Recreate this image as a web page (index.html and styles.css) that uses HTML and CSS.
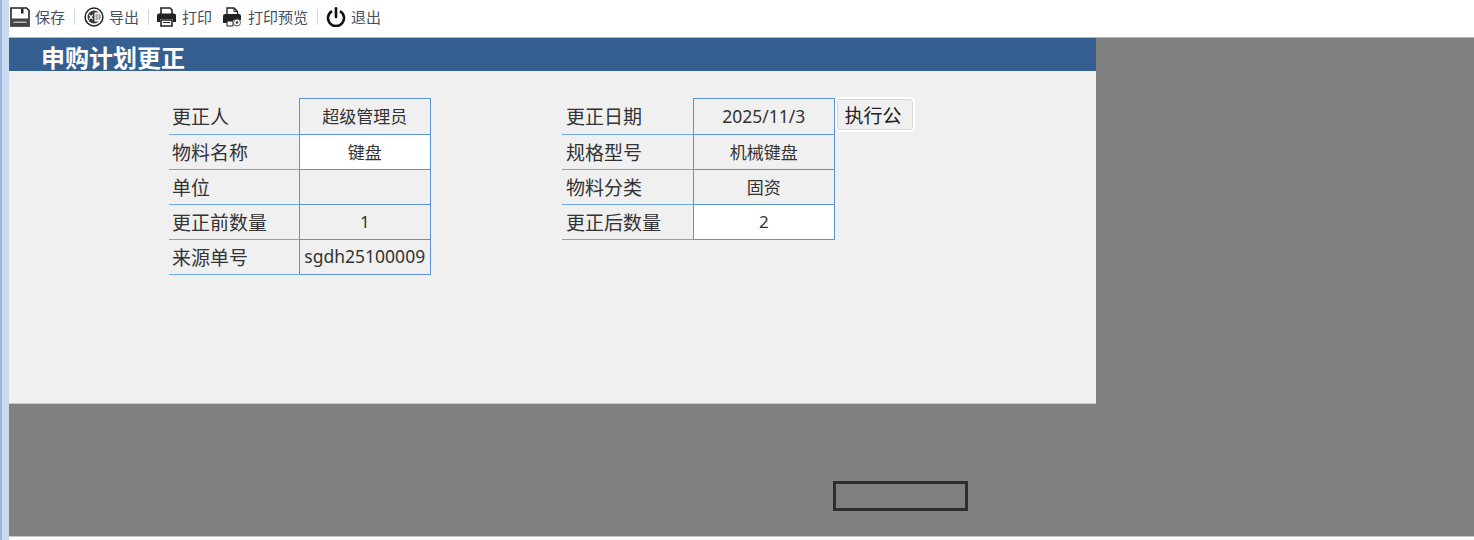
FILE: index.html
```html
<!DOCTYPE html>
<html lang="zh-CN">
  <head>
    <meta charset="UTF-8" />
    <title>申购计划更正</title>
    <link rel="stylesheet" href="styles.css">
  </head>
  <body>
    <div class="rail"></div>
    <div class="main">
      <!-- Toolbar -->
      <div class="toolbar">
        <a class="tool">
          <svg class="icon" viewBox="0 0 20 20">
            <path d="M1 1h15.500L19 3.500V19H1z" fill="#fff" stroke="#222" stroke-width="1.600" />
            <path d="M11 1.500h2.500v5H11z" fill="#222" />
            <path d="M1.500 11.500h17V19h-17z" fill="#444" />
            <path d="M3.500 14.500h13v1.500h-13z" fill="#bbb" />
          </svg>
          <span>保存</span>
        </a>
        <i class="sep"></i>
        <a class="tool">
          <svg class="icon" viewBox="0 0 20 20">
            <circle cx="10" cy="10" r="8.900" fill="none" stroke="#222" stroke-width="1.500" />
            <circle cx="10" cy="10" r="6.500" fill="#3a3a3a" />
            <path d="M10.500 5.500h5v9h-5z" fill="#fff" />
            <path d="M5.300 7.800l3.400 4.400M8.700 7.800l-3.400 4.400" stroke="#fff" stroke-width="1.200" />
            <path d="M11.500 8h3M11.500 10h3M11.500 12h3" stroke="#333" stroke-width=".8" />
          </svg>
          <span>导出</span>
        </a>
        <i class="sep sep-print"></i>
        <a class="tool">
          <svg class="icon icon-wide" viewBox="0 0 21 20">
            <path d="M5 1h9l2 2v5H5z" fill="none" stroke="#222" stroke-width="1.600" />
            <path d="M1 8.500a2 2 0 0 1 2-2h15a2 2 0 0 1 2 2V15h-3v-3H4v3H1z" fill="#222" />
            <path d="M5 13h11v6H5z" fill="none" stroke="#222" stroke-width="1.600" />
            <path d="M7 15h7v1H7z" fill="#222" />
          </svg>
          <span>打印</span>
        </a>
        <a class="tool tool-preview">
          <svg class="icon" viewBox="0 0 20 20">
            <path d="M5 1h7l3.500 3.500V8H5z" fill="none" stroke="#222" stroke-width="1.400" />
            <path d="M12 1v3.500h3.500" fill="none" stroke="#222" />
            <path d="M1 9a2 2 0 0 1 2-2h14a2 2 0 0 1 2 2v4h-8v3H1z" fill="#222" />
            <path d="M5 14h6v5H5z" fill="#fff" stroke="#222" />
            <circle cx="15" cy="15.500" r="3.500" fill="#fff" stroke="#555" />
            <circle cx="15" cy="15.500" r="1.300" fill="#333" />
          </svg>
          <span>打印预览</span>
        </a>
        <i class="sep sep-exit"></i>
        <a class="tool">
          <svg class="icon" viewBox="0 0 20 20">
            <path d="M6 4.200a8 8 0 1 0 8 0" fill="none" stroke="#111" stroke-width="2.600" />
            <path d="M10 1.300v8.700" stroke="#111" stroke-width="2.600" stroke-linecap="round" />
          </svg>
          <span>退出</span>
        </a>
      </div>

      <div class="stage">
        <div class="panel">
          <div class="panel-title">申购计划更正</div>
          <div class="forms">
            <table class="form form-left">
              <tr>
                <th>更正人</th>
                <td>超级管理员</td>
              </tr>
              <tr>
                <th>物料名称</th>
                <td class="editable">键盘</td>
              </tr>
              <tr>
                <th>单位</th>
                <td></td>
              </tr>
              <tr>
                <th>更正前数量</th>
                <td>1</td>
              </tr>
              <tr>
                <th>来源单号</th>
                <td class="num">sgdh25100009</td>
              </tr>
            </table>

            <table class="form form-right">
              <tr>
                <th>更正日期</th>
                <td class="num">2025/11/3</td>
              </tr>
              <tr>
                <th>规格型号</th>
                <td>机械键盘</td>
              </tr>
              <tr>
                <th>物料分类</th>
                <td>固资</td>
              </tr>
              <tr>
                <th>更正后数量</th>
                <td class="editable">2</td>
              </tr>
            </table>

            <button class="run-btn">执行公</button>
          </div>
        </div>
        <div class="empty-box"></div>
      </div>
    </div>
  </body>
</html>
```

FILE: styles.css
```css
* {
  margin: 0;
  padding: 0;
  box-sizing: border-box;
}
html,
body {
  height: 100%;
  width: 100%;
  overflow: hidden;
}
body {
  display: flex;
  background: #fff;
  font-family: "Noto Sans", "Noto Sans CJK SC", sans-serif;
  color: #333;
}

.rail {
  width: 9px;
  flex: none;
  background: linear-gradient(90deg, #9db7de 0, #9db7de 2px, #c9daf1 2px, #c9daf1 100%);
}

.main {
  flex: 1;
  min-width: 0;
  display: flex;
  flex-direction: column;
  height: 537px;
}

/* Toolbar */
.toolbar {
  height: 38px;
  flex: none;
  display: flex;
  align-items: center;
  padding: 0 0 3px 1px;
  background: #fff;
  border-bottom: 1px solid #b5b5b5;
}
.tool {
  display: flex;
  align-items: center;
  gap: 5px;
  font-size: 15px;
  line-height: 20px;
  color: #44505e;
}
.tool-preview {
  margin-left: 10px;
  gap: 6px;
}
.icon {
  width: 20px;
  height: 20px;
  flex: none;
}
.icon-wide {
  width: 21px;
}
.sep {
  width: 1px;
  height: 16px;
  margin: 0 9px;
  background: #cfd6dc;
}
.sep-print {
  margin-right: 7px;
}
.sep-exit {
  margin-right: 8px;
}

/* Gray working area */
.stage {
  flex: 1;
  background: #808080;
  border-bottom: 1px solid #c8c8c8;
}
.panel {
  width: 1087px;
  height: 366px;
  background: #f0f0f0;
  border-bottom: 1px solid #c8c8c8;
}
.panel-title {
  height: 33px;
  padding: 8px 0 0 32px;
  background: #355f91;
  color: #fff;
  font-size: 24px;
  font-weight: 700;
  line-height: 24px;
}

.forms {
  display: flex;
  align-items: flex-start;
  padding: 27px 0 0 160px;
}
.form {
  border-collapse: collapse;
  table-layout: fixed;
  font-size: 17px;
}
.form-left {
  width: 262px;
}
.form-right {
  width: 273px;
  margin-left: 131px;
}
.form th {
  width: 130px;
  height: 35px;
  padding-left: 3px;
  font-size: 19px;
  font-weight: 400;
  text-align: left;
  border-bottom: 1px solid #6fa8ea;
}
.form-right th {
  width: 131px;
  padding-left: 4px;
}
.form td {
  height: 35px;
  padding-bottom: 2px;
  text-align: center;
  border: 1px solid #5b93d6;
  white-space: nowrap;
}
.form tr:first-child th,
.form tr:first-child td {
  height: 36px;
}
.form .num {
  font-size: 17.5px;
}
.form .editable {
  background: #fff;
}

.run-btn {
  width: 80px;
  height: 35px;
  margin-top: -1px;
  padding-right: 4px;
  font-family: inherit;
  font-size: 19px;
  color: #222;
  background: #f0f0f0;
  border: 2px solid #fff;
  border-radius: 5px;
  box-shadow: inset 0 0 0 1px #d8d8d8;
}

.empty-box {
  width: 135px;
  height: 30px;
  margin: 77px 0 0 824px;
  border: 3px solid #2e2e2e;
}
```
